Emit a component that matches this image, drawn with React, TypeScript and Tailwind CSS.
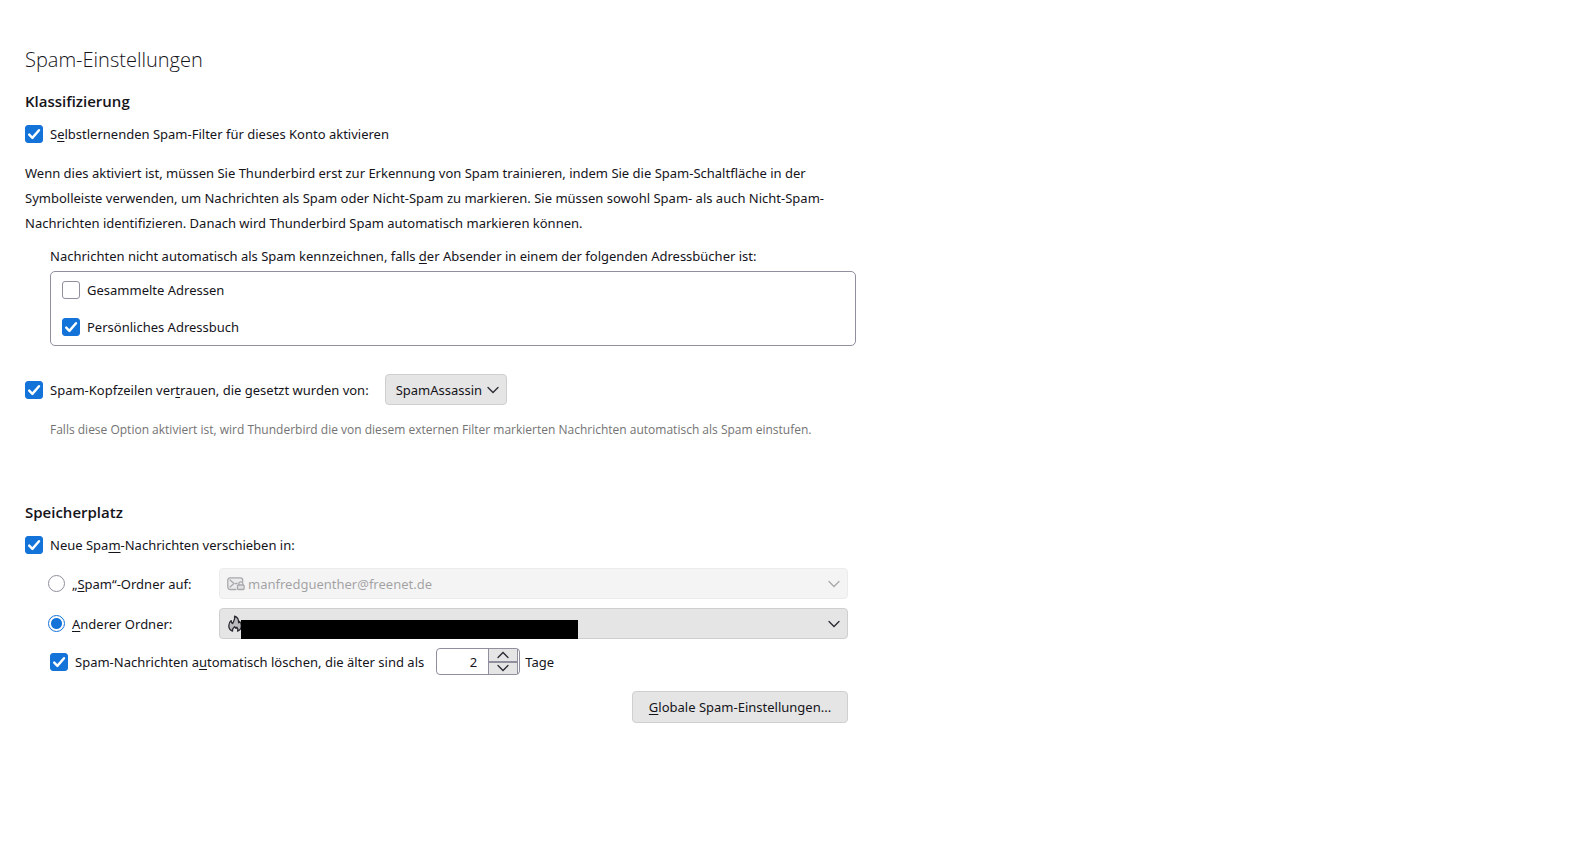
import type { ReactNode } from 'react';

type CheckProps = {
  id: string;
  checked?: boolean;
  children: ReactNode;
};

const Key = ({ children }: { children: ReactNode }) => (
  <span className="underline decoration-1 underline-offset-2">{children}</span>
);

const Check = ({ id, checked = false, children }: CheckProps) => (
  <div className="flex items-center gap-[7px]">
    <span className="grid size-[18px] shrink-0">
      <input
        id={id}
        type="checkbox"
        defaultChecked={checked}
        className="peer col-start-1 row-start-1 size-[18px] appearance-none rounded-[3px] border border-[#8f8f9d] bg-white checked:border-[#1373d9] checked:bg-[#1373d9]"
      />
      <svg
        viewBox="0 0 18 18"
        className="pointer-events-none invisible col-start-1 row-start-1 size-[18px] peer-checked:visible"
        fill="none"
        stroke="#fff"
        strokeWidth="2.4"
        strokeLinecap="round"
        strokeLinejoin="round"
      >
        <path d="M4.2 9.6 7.4 12.9 14 5.2" />
      </svg>
    </span>
    <label htmlFor={id}>{children}</label>
  </div>
);

const Radio = ({ id, checked = false, children }: CheckProps) => (
  <div className="flex w-[171px] shrink-0 items-center gap-[7px]">
    <input
      id={id}
      type="radio"
      name="target"
      defaultChecked={checked}
      className="size-[17px] shrink-0 appearance-none rounded-full border border-[#8f8f9d] bg-white checked:border-[#1373d9] checked:bg-[radial-gradient(circle,#1373d9_5px,#fff_6px)]"
    />
    <label htmlFor={id}>{children}</label>
  </div>
);

const Chevron = ({ up = false }: { up?: boolean }) => (
  <svg viewBox="0 0 12 8" className="h-2 w-3" fill="none" stroke="#2b2a33" strokeWidth="1.3" strokeLinecap="round">
    <path d={up ? 'M1 6.5 6 1.5 11 6.5' : 'M1 1.5 6 6.5 11 1.5'} />
  </svg>
);

const AccountIcon = () => (
  <svg
    viewBox="0 0 18 16"
    className="h-4 w-[18px]"
    fill="none"
    stroke="#2b2a33"
    strokeWidth="1.3"
    strokeLinejoin="round"
    strokeLinecap="round"
  >
    <path d="M9 13.5H3A2.2 2.2 0 0 1 .8 11.3V4A2.2 2.2 0 0 1 3 1.8h10.5A2.2 2.2 0 0 1 15.7 4v1.5" fill="#cfcfd4" />
    <path d="M3 4 7 7.5 3 11M8.500 7.500h1.500" />
    <path d="M11.800 9V7.800a2 2 0 0 1 4 0V9" />
    <rect x="10.500" y="9" width="6.600" height="4.500" rx="1" fill="#b5b5bb" />
  </svg>
);

const FlameIcon = () => (
  <svg
    viewBox="0 0 16 18"
    className="h-[18px] w-4"
    fill="#b9b9be"
    stroke="#2b2a33"
    strokeWidth="1.3"
    strokeLinejoin="round"
  >
    <path d="M5.500 16.200C3.300 15.300 1.800 13.300 1.800 10.800 1.800 8.500 2.600 6.800 4.200 5.600 4.200 7.200 4.700 8.200 5.600 8.600 6.300 6.500 8.300 5 7.600 1.200 10.400 2.300 11.700 4.600 11.500 7.300 11.500 7.900 11.900 8 12.200 7.400L12.600 6.400C13.800 7.600 14.300 9.200 14.300 10.800 14.300 13.300 12.900 15.300 10.600 16.200 11.100 14.600 10.900 13.300 9.900 12.300L8.900 13.300 7.500 11.700C6 12.900 5.200 14.300 5.500 16.200Z" />
  </svg>
);

export default function App() {
  return (
    <main className="min-h-screen bg-white px-[25px] pt-[42px] pb-8 font-['Noto_Sans','Open_Sans',sans-serif] text-[13px] leading-[20px] text-[#15141a]">
      <div className="max-w-[831px]">
        <h1 className="font-['Open_Sans','Noto_Sans',sans-serif] text-[20px] leading-[36px] font-light">
          Spam-Einstellungen
        </h1>

        <section>
          <h2 className="mt-[11px] font-['Open_Sans','Noto_Sans',sans-serif] text-[15px] leading-[24px] font-semibold">
            Klassifizierung
          </h2>
          <div className="mt-[11px]">
            <Check id="adaptive" checked>
              S<Key>e</Key>lbstlernenden Spam-Filter für dieses Konto aktivieren
            </Check>
          </div>
          <p className="mt-[17px] leading-[25px]">
            Wenn dies aktiviert ist, müssen Sie Thunderbird erst zur Erkennung von Spam trainieren, indem Sie die
            Spam-Schaltfläche in der Symbolleiste verwenden, um Nachrichten als Spam oder Nicht-Spam zu markieren. Sie
            müssen sowohl Spam- als auch Nicht-Spam-Nachrichten identifizieren. Danach wird Thunderbird Spam
            automatisch markieren können.
          </p>

          <fieldset className="mt-[10px] pl-[25px]">
            <legend className="leading-[20px]">
              Nachrichten nicht automatisch als Spam kennzeichnen, falls <Key>d</Key>er Absender in einem der folgenden
              Adressbücher ist:
            </legend>
            <div className="mt-[5px] flex flex-col gap-[17px] rounded-[5px] border border-[#8f8f9d] px-[11px] py-2">
              <Check id="collected">Gesammelte Adressen</Check>
              <Check id="personal" checked>
                Persönliches Adressbuch
              </Check>
            </div>
          </fieldset>

          <div className="mt-7 flex items-center gap-4">
            <Check id="trust" checked>
              Spam-Kopfzeilen ver<Key>t</Key>rauen, die gesetzt wurden von:
            </Check>
            <div className="grid items-center">
              <select
                aria-label="Spam-Filter"
                className="col-start-1 row-start-1 h-[31px] w-[122px] appearance-none rounded-[4px] border border-[#cfcfd2] bg-[#e5e5e5] pl-[10px]"
              >
                <option>SpamAssassin</option>
              </select>
              <span className="pointer-events-none col-start-1 row-start-1 mr-2 justify-self-end">
                <Chevron />
              </span>
            </div>
          </div>
          <p className="mt-[15px] pl-[25px] font-['Open_Sans','Noto_Sans',sans-serif] text-[12px] text-[#737373]">
            Falls diese Option aktiviert ist, wird Thunderbird die von diesem externen Filter markierten Nachrichten
            automatisch als Spam einstufen.
          </p>
        </section>

        <section className="mt-[60px] pr-2">
          <h2 className="font-['Open_Sans','Noto_Sans',sans-serif] text-[15px] leading-[24px] font-semibold">
            Speicherplatz
          </h2>
          <div className="mt-[11px]">
            <Check id="move" checked>
              Neue Spa<Key>m</Key>-Nachrichten verschieben in:
            </Check>
          </div>

          <div className="mt-[13px] flex flex-col gap-[9px] pl-[23px]">
            <div className="flex items-center">
              <Radio id="account">
                „<Key>S</Key>pam“-Ordner auf:
              </Radio>
              <div className="grid flex-1 items-center opacity-40">
                <select
                  aria-label="Konto"
                  disabled
                  className="col-start-1 row-start-1 h-[31px] w-full appearance-none rounded-[4px] border border-[#cfcfd2] bg-[#e5e5e5] pl-[28px]"
                >
                  <option>manfredguenther@freenet.de</option>
                </select>
                <span className="pointer-events-none col-start-1 row-start-1 ml-2">
                  <AccountIcon />
                </span>
                <span className="pointer-events-none col-start-1 row-start-1 mr-2 justify-self-end">
                  <Chevron />
                </span>
              </div>
            </div>

            <div className="flex items-center">
              <Radio id="other" checked>
                <Key>A</Key>nderer Ordner:
              </Radio>
              <div className="grid flex-1 items-center">
                <select
                  aria-label="Ordner"
                  className="col-start-1 row-start-1 h-[31px] w-full appearance-none rounded-[4px] border border-[#cfcfd2] bg-[#e5e5e5] pl-[28px]"
                />
                <span className="pointer-events-none col-start-1 row-start-1 ml-2">
                  <FlameIcon />
                </span>
                <span className="pointer-events-none col-start-1 row-start-1 ml-[22px] h-[19px] w-[337px] self-end bg-black" />
                <span className="pointer-events-none col-start-1 row-start-1 mr-2 justify-self-end">
                  <Chevron />
                </span>
              </div>
            </div>
          </div>

          <div className="mt-[9px] flex items-center gap-[5px] pl-[25px]">
            <Check id="purge" checked>
              Spam-Nachrichten a<Key>u</Key>tomatisch löschen, die älter sind als
            </Check>
            <div className="ml-[7px] flex h-[27px] w-[84px] rounded-[4px] border border-[#8f8f9d] bg-white pr-px">
              <input
                type="number"
                aria-label="Tage"
                defaultValue={2}
                className="min-w-0 flex-1 appearance-none pr-[11px] text-right [appearance:textfield] [&::-webkit-inner-spin-button]:appearance-none"
              />
              <div className="flex w-[30px] flex-col border-x border-[#8f8f9d] bg-[#e5e5e5]">
                <button aria-label="Mehr" className="flex flex-1 items-center justify-center border-b border-[#8f8f9d]">
                  <Chevron up />
                </button>
                <button aria-label="Weniger" className="flex flex-1 items-center justify-center border-t border-[#8f8f9d]">
                  <Chevron />
                </button>
              </div>
            </div>
            <span>Tage</span>
          </div>

          <div className="mt-4 flex justify-end">
            <button className="h-8 w-[216px] rounded-[4px] border border-[#cfcfd2] bg-[#e5e5e5]">
              <Key>G</Key>lobale Spam-Einstellungen...
            </button>
          </div>
        </section>
      </div>
    </main>
  );
}
